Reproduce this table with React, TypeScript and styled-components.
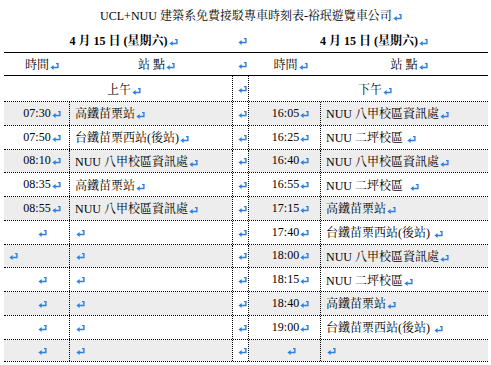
import React from "react";
import styled, { createGlobalStyle } from "styled-components";

const GlobalStyle = createGlobalStyle`
  html, body { margin: 0; padding: 0; background: #ffffff; }
  body {
    font-family: "Liberation Serif", "Noto Serif CJK TC", "AR PL UMing TW", "Noto Sans CJK TC", serif;
    font-size: 12px;
    color: #000000;
  }
`;

const COLS = "65px 163px 17px 71px 168px";
const GRAY = "#ededed";
const DOT = "1px dotted #000";
const BLUE = "#2f80e0";

const Page = styled.div`
  width: 484px;
  padding-left: 4px;
`;

const Title = styled.div`
  padding: 7px 0 3px 10px;
  line-height: 18px;
  text-align: center;
  white-space: nowrap;
`;

const Row = styled.div<{ $h: string; $kind?: "head" | "data" | "last" }>`
  display: grid;
  grid-template-columns: ${COLS};
  box-sizing: border-box;
  height: ${(p) => p.$h};
  border-top: ${(p) =>
    p.$kind === "head" ? "1px solid #000" : p.$kind === "data" || p.$kind === "last" ? DOT : "none"};
  border-bottom: ${(p) =>
    p.$kind === "head" ? "1px solid #000" : p.$kind === "last" ? DOT : "none"};
`;

const BaseCell = styled.div`
  display: flex;
  align-items: center;
  box-sizing: border-box;
  min-width: 0;
  white-space: pre;
`;

const HalfCell = styled(BaseCell)<{ $bold?: boolean; $pad: number }>`
  grid-column: span 2;
  justify-content: center;
  padding-left: ${(p) => p.$pad}px;
  font-weight: ${(p) => (p.$bold ? 700 : 400)};
`;

const MidCell = styled(BaseCell)<{ $lined?: boolean }>`
  justify-content: flex-end;
  padding-right: 1px;
  border-left: ${(p) => (p.$lined ? DOT : "1px solid transparent")};
  border-right: ${(p) => (p.$lined ? DOT : "1px solid transparent")};
  background: #ffffff;
`;

const TimeCell = styled(BaseCell)<{ $gray?: boolean; $left?: boolean; $pad: number }>`
  justify-content: ${(p) => (p.$left ? "flex-start" : "center")};
  padding-left: ${(p) => (p.$left ? 4 : p.$pad)}px;
  background: ${(p) => (p.$gray ? GRAY : "transparent")};
`;

const StationCell = styled(BaseCell)<{ $gray?: boolean }>`
  justify-content: flex-start;
  padding-left: 5px;
  border-left: ${DOT};
  background: ${(p) => (p.$gray ? GRAY : "transparent")};
`;

const HeadStation = styled(BaseCell)<{ $pad: number }>`
  justify-content: center;
  padding-left: ${(p) => p.$pad}px;
`;

const Text = styled.span`
  display: inline-block;
  white-space: pre;
`;

const MarkSvg = styled.svg`
  width: 9px;
  height: 8px;
  margin-left: 1px;
  vertical-align: -1px;
`;

const Mark: React.FC = () => (
  <MarkSvg viewBox="0 0 9 8">
    <path d="M6 1.6 H7.9 V5.5 H3" fill="none" stroke={BLUE} strokeWidth="1.4" />
    <polygon points="0.4,5.5 3.6,2.9 3.6,8" fill={BLUE} />
  </MarkSvg>
);

const T: React.FC<{ children?: React.ReactNode }> = ({ children }) => (
  <Text>
    {children}
    <Mark />
  </Text>
);

type Entry = { time: string; station: string; leftMark?: boolean };

const morning: Entry[] = [
  { time: "07:30", station: "高鐵苗栗站" },
  { time: "07:50", station: "台鐵苗栗西站(後站)" },
  { time: "08:10", station: "NUU 八甲校區資訊處" },
  { time: "08:35", station: "高鐵苗栗站" },
  { time: "08:55", station: "NUU 八甲校區資訊處" },
  { time: "", station: "" },
  { time: "", station: "", leftMark: true },
  { time: "", station: "" },
  { time: "", station: "" },
  { time: "", station: "" },
  { time: "", station: "" },
];

const afternoon: Entry[] = [
  { time: "16:05", station: "NUU 八甲校區資訊處" },
  { time: "16:25", station: "NUU 二坪校區 " },
  { time: "16:40", station: "NUU 八甲校區資訊處" },
  { time: "16:55", station: "NUU 二坪校區  " },
  { time: "17:15", station: "高鐵苗栗站" },
  { time: "17:40", station: "台鐵苗栗西站(後站) " },
  { time: "18:00", station: "NUU 八甲校區資訊處" },
  { time: "18:15", station: "NUU 二坪校區" },
  { time: "18:40", station: "高鐵苗栗站" },
  { time: "19:00", station: "台鐵苗栗西站(後站) " },
  { time: "", station: "" },
];

export default function App() {
  return (
    <>
      <GlobalStyle />
      <Page>
        <Title>
          <T>UCL+NUU 建築系免費接駁專車時刻表-裕珉遊覽車公司</T>
        </Title>
        <Row $h="24px">
          <HalfCell $bold $pad={11}>
            <T>4 月 15 日 (星期六)</T>
          </HalfCell>
          <MidCell>
            <T />
          </MidCell>
          <HalfCell $bold $pad={11}>
            <T>4 月 15 日 (星期六)</T>
          </HalfCell>
        </Row>
        <Row $h="24px" $kind="head">
          <TimeCell $pad={11}>
            <T>時間</T>
          </TimeCell>
          <HeadStation $pad={12}>
            <T>站 點</T>
          </HeadStation>
          <MidCell>
            <T />
          </MidCell>
          <TimeCell $pad={12}>
            <T>時間</T>
          </TimeCell>
          <HeadStation $pad={10}>
            <T>站 點</T>
          </HeadStation>
        </Row>
        <Row $h="25px">
          <HalfCell $pad={12}>
            <T>上午</T>
          </HalfCell>
          <MidCell $lined>
            <T />
          </MidCell>
          <HalfCell $pad={13}>
            <T>下午</T>
          </HalfCell>
        </Row>
        {morning.map((m, i) => {
          const a = afternoon[i];
          const gray = i % 2 === 0;
          const last = i === morning.length - 1;
          return (
            <Row key={i} $h="23.75px" $kind={last ? "last" : "data"}>
              <TimeCell $gray={gray} $pad={11} $left={m.leftMark}>
                <T>{m.time}</T>
              </TimeCell>
              <StationCell $gray={gray}>
                <T>{m.station}</T>
              </StationCell>
              <MidCell $lined>
                <T />
              </MidCell>
              <TimeCell $gray={gray} $pad={12}>
                <T>{a.time}</T>
              </TimeCell>
              <StationCell $gray={gray}>
                <T>{a.station}</T>
              </StationCell>
            </Row>
          );
        })}
      </Page>
    </>
  );
}
